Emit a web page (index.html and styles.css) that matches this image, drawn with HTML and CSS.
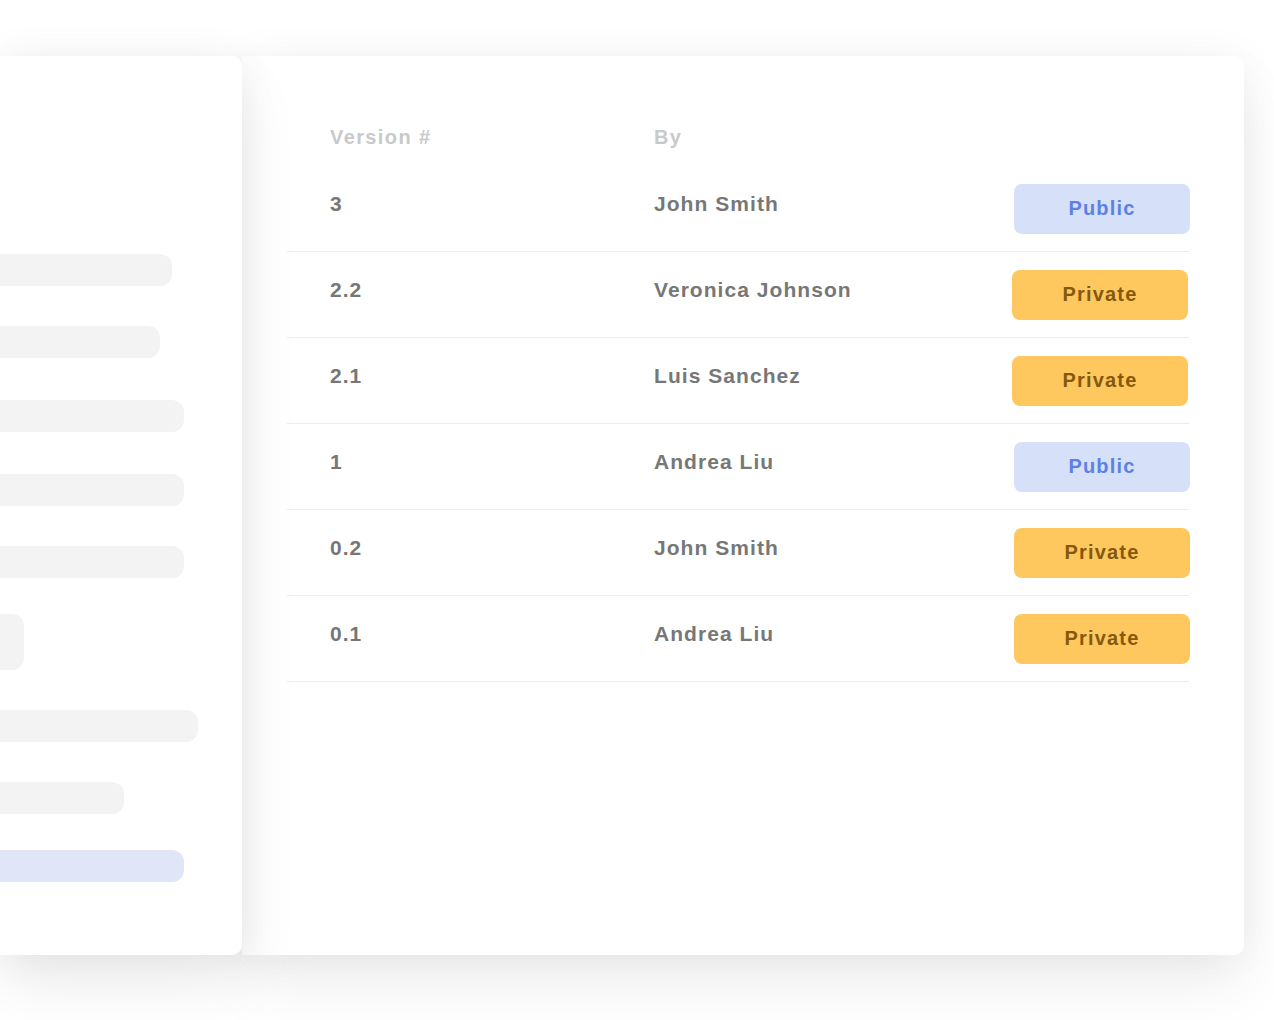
FILE: index.html
```html
<!DOCTYPE html>
<html lang="en">
<head>
    <meta charset="UTF-8">
    <meta name="viewport" content="width=device-width, initial-scale=1.0">
    <title>Versions</title>
    <link rel="stylesheet" href="styles.css">
</head>
<body>
    <div class="stage">
        <aside class="sidebar">
            <div class="bar w172 gap40"></div>
            <div class="bar w160 gap42"></div>
            <div class="bar w184 gap42"></div>
            <div class="bar w184 gap40"></div>
            <div class="bar w184 gap36"></div>
            <div class="bar w24 tall gap40"></div>
            <div class="bar w198 gap40"></div>
            <div class="bar w124 gap36"></div>
            <div class="bar w184 active"></div>
        </aside>
        <main class="versions-card">
            <div class="versions">
                <div class="versions-head">
                    <span class="col-version">Version #</span>
                    <span class="col-by">By</span>
                </div>
                <div class="version-row">
                    <span class="col-version">3</span>
                    <span class="col-by">John Smith</span>
                    <span class="badge public">Public</span>
                </div>
                <div class="version-row">
                    <span class="col-version">2.2</span>
                    <span class="col-by">Veronica Johnson</span>
                    <span class="badge private shifted">Private</span>
                </div>
                <div class="version-row">
                    <span class="col-version">2.1</span>
                    <span class="col-by">Luis Sanchez</span>
                    <span class="badge private shifted">Private</span>
                </div>
                <div class="version-row">
                    <span class="col-version">1</span>
                    <span class="col-by">Andrea Liu</span>
                    <span class="badge public">Public</span>
                </div>
                <div class="version-row">
                    <span class="col-version">0.2</span>
                    <span class="col-by">John Smith</span>
                    <span class="badge private">Private</span>
                </div>
                <div class="version-row">
                    <span class="col-version">0.1</span>
                    <span class="col-by">Andrea Liu</span>
                    <span class="badge private">Private</span>
                </div>
            </div>
        </main>
    </div>
</body>
</html>
```

FILE: styles.css
```css
html, body {
    height: 100%;
}

body {
    margin: 0;
    padding: 56px 0 65px;
    box-sizing: border-box;
    background-color: #fff;
    font-family: 'Liberation Sans', Arial, sans-serif;
}

.stage {
    display: flex;
    align-items: stretch;
    height: 899px;
    padding-right: 30px;
}

.sidebar {
    position: relative;
    z-index: 2;
    width: 242px;
    flex-shrink: 0;
    display: flex;
    flex-direction: column;
    padding-top: 198px;
    box-sizing: border-box;
    background-color: #fff;
    border-radius: 0 10px 10px 0;
    box-shadow: 0 0 40px rgba(0, 0, 0, 0.06), 0 30px 60px rgba(0, 0, 0, 0.08);
}

.bar {
    height: 32px;
    border-radius: 0 12px 12px 0;
    background-color: #f3f3f3;
}

.bar.tall {
    height: 56px;
}

.bar.active {
    background-color: #e0e6f8;
}

.gap36 { margin-bottom: 36px; }
.gap40 { margin-bottom: 40px; }
.gap42 { margin-bottom: 42px; }

.w24 { width: 24px; }
.w124 { width: 124px; }
.w160 { width: 160px; }
.w172 { width: 172px; }
.w184 { width: 184px; }
.w198 { width: 198px; }

.versions-card {
    flex: 1;
    background-color: #fff;
    border-radius: 0 10px 10px 0;
    box-shadow: 0 0 40px rgba(0, 0, 0, 0.05), 0 30px 60px rgba(0, 0, 0, 0.07);
    padding: 69px 55px 0 45px;
}

.versions-head {
    display: flex;
    height: 24px;
    line-height: 24px;
    margin-bottom: 17px;
    padding-left: 43px;
    font-size: 20px;
    font-weight: bold;
    color: #c9c9c9;
    letter-spacing: 1.4px;
}

.version-row {
    display: flex;
    align-items: flex-start;
    box-sizing: border-box;
    height: 86px;
    padding-top: 18px;
    padding-left: 43px;
    border-bottom: 1px solid #ececec;
    font-size: 21px;
    font-weight: bold;
    color: #777;
    letter-spacing: 1.05px;
}

.version-row .col-version,
.version-row .col-by {
    line-height: 24px;
    margin-top: 8px;
}

.col-version {
    width: 324px;
}

.col-by {
    flex: 1;
}

.badge {
    width: 176px;
    height: 50px;
    line-height: 49px;
    text-align: center;
    border-radius: 8px;
    margin-right: -1px;
    font-size: 20px;
    letter-spacing: 1.2px;
}

.badge.shifted {
    margin-right: 1px;
}

.badge.public {
    background-color: #d6e0f8;
    color: #5b80e6;
}

.badge.private {
    background-color: #fec85f;
    color: #85590c;
}
```
